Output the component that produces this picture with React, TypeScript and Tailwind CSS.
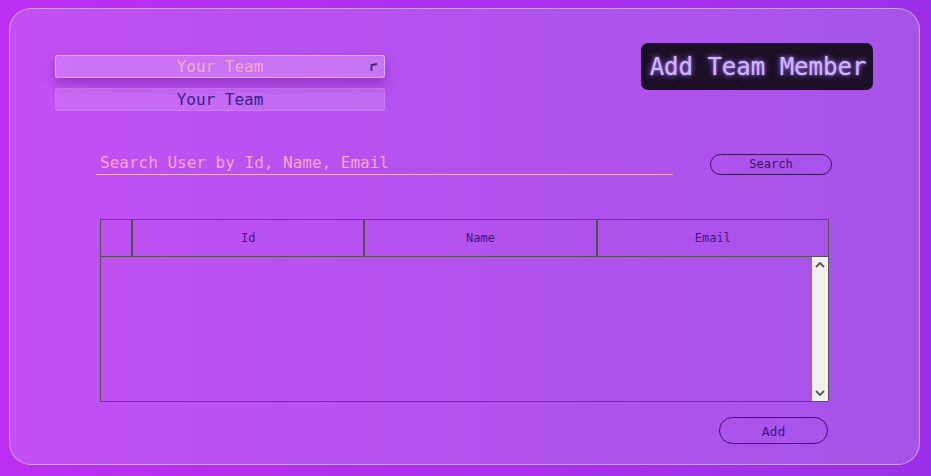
import React from "react";

const mono = { fontFamily: '"DejaVu Sans Mono", "Liberation Mono", monospace' };

const Chevron = ({ up }: { up?: boolean }) => (
  <svg width="10" height="6" viewBox="0 0 10 6" className="block">
    <polyline
      points={up ? "1,5 5,1 9,5" : "1,1 5,5 9,1"}
      fill="none"
      stroke="#5f5f5f"
      strokeWidth="2"
    />
  </svg>
);

const columns = ["Id", "Name", "Email"];

export default function App() {
  return (
    <div
      className="w-full h-[476px] bg-linear-to-r from-[#bc2ef1] to-[#9b30e8] pt-[8px] pl-[9px] pr-[11px] pb-[11px]"
      style={mono}
    >
      <div className="h-full rounded-[22px] border border-white/40 bg-linear-to-r from-[#c250f4] to-[#a554e8] flex flex-col">
        {/* top row */}
        <div className="flex justify-between items-start">
          <div className="mt-[46px] ml-[45px] w-[330px] flex flex-col">
            <div className="relative h-[23px] rounded-[3px] border border-white/40 bg-white/20 shadow-[0_6px_12px_rgba(90,20,140,0.45)] flex items-center justify-center">
              <span className="text-[16px] leading-none text-[#f4a9cb]">Your Team</span>
              <svg width="8" height="9" viewBox="0 0 8 9" className="absolute right-[6px] top-[7px]">
                <polyline points="1.5,8 1.5,2 7,1" fill="none" stroke="#4a2577" strokeWidth="1.8" />
              </svg>
            </div>
            <div className="mt-[10px] h-[23px] rounded-[3px] border border-white/10 bg-white/15 flex items-center justify-center">
              <span className="text-[16px] leading-none text-[#3b1b8e]">Your Team</span>
            </div>
          </div>
          <button className="mt-[34px] mr-[46px] h-[47px] w-[232px] rounded-[7px] bg-[#1b0f25] text-[24px] pl-[2px] text-[#cdb6f6] [text-shadow:0_0_6px_#a46cff,0_0_2px_#b98aff]">
            Add Team Member
          </button>
        </div>

        {/* search row */}
        <div className="mt-[40px] ml-[86px] flex items-end">
          <div className="w-[577px] h-[24px] border-b border-[#f6a8cc] pl-[4px] flex items-center">
            <span className="text-[16px] leading-none text-[#f6a6c9]">Search User by Id, Name, Email</span>
          </div>
          <button className="ml-[37px] w-[122px] h-[21px] pb-[2px] rounded-full border border-[#3d0f66] text-[12px] leading-none text-[#3a1266]">
            Search
          </button>
        </div>

        {/* table */}
        <div className="mt-[44px] ml-[90px] w-[729px] flex flex-col items-end">
          <div className="w-full border border-[#55524f]">
            <div className="flex h-[37px] border-b border-[#55524f]">
              <div className="w-[32px] border-r-2 border-[#4f4f4f]" />
              {columns.map((c, i) => (
                <div
                  key={c}
                  className={
                    "flex-1 flex items-center justify-center text-[12px] text-[#3b1a80] " +
                    (i < 2 ? "border-r-2 border-[#4f4f4f]" : "")
                  }
                >
                  {c}
                </div>
              ))}
            </div>
            <div className="flex h-[144px]">
              <div className="flex-1" />
              <div className="w-[16px] bg-[#f0f0f0] flex flex-col items-center justify-between py-[5px]">
                <Chevron up />
                <Chevron />
              </div>
            </div>
          </div>
          <button className="mt-[15px] mr-[1px] w-[109px] h-[27px] pt-[1px] rounded-full border border-[#3d0f66] text-[13px] leading-none text-[#3a1a8a]">
            Add
          </button>
        </div>
      </div>
    </div>
  );
}
